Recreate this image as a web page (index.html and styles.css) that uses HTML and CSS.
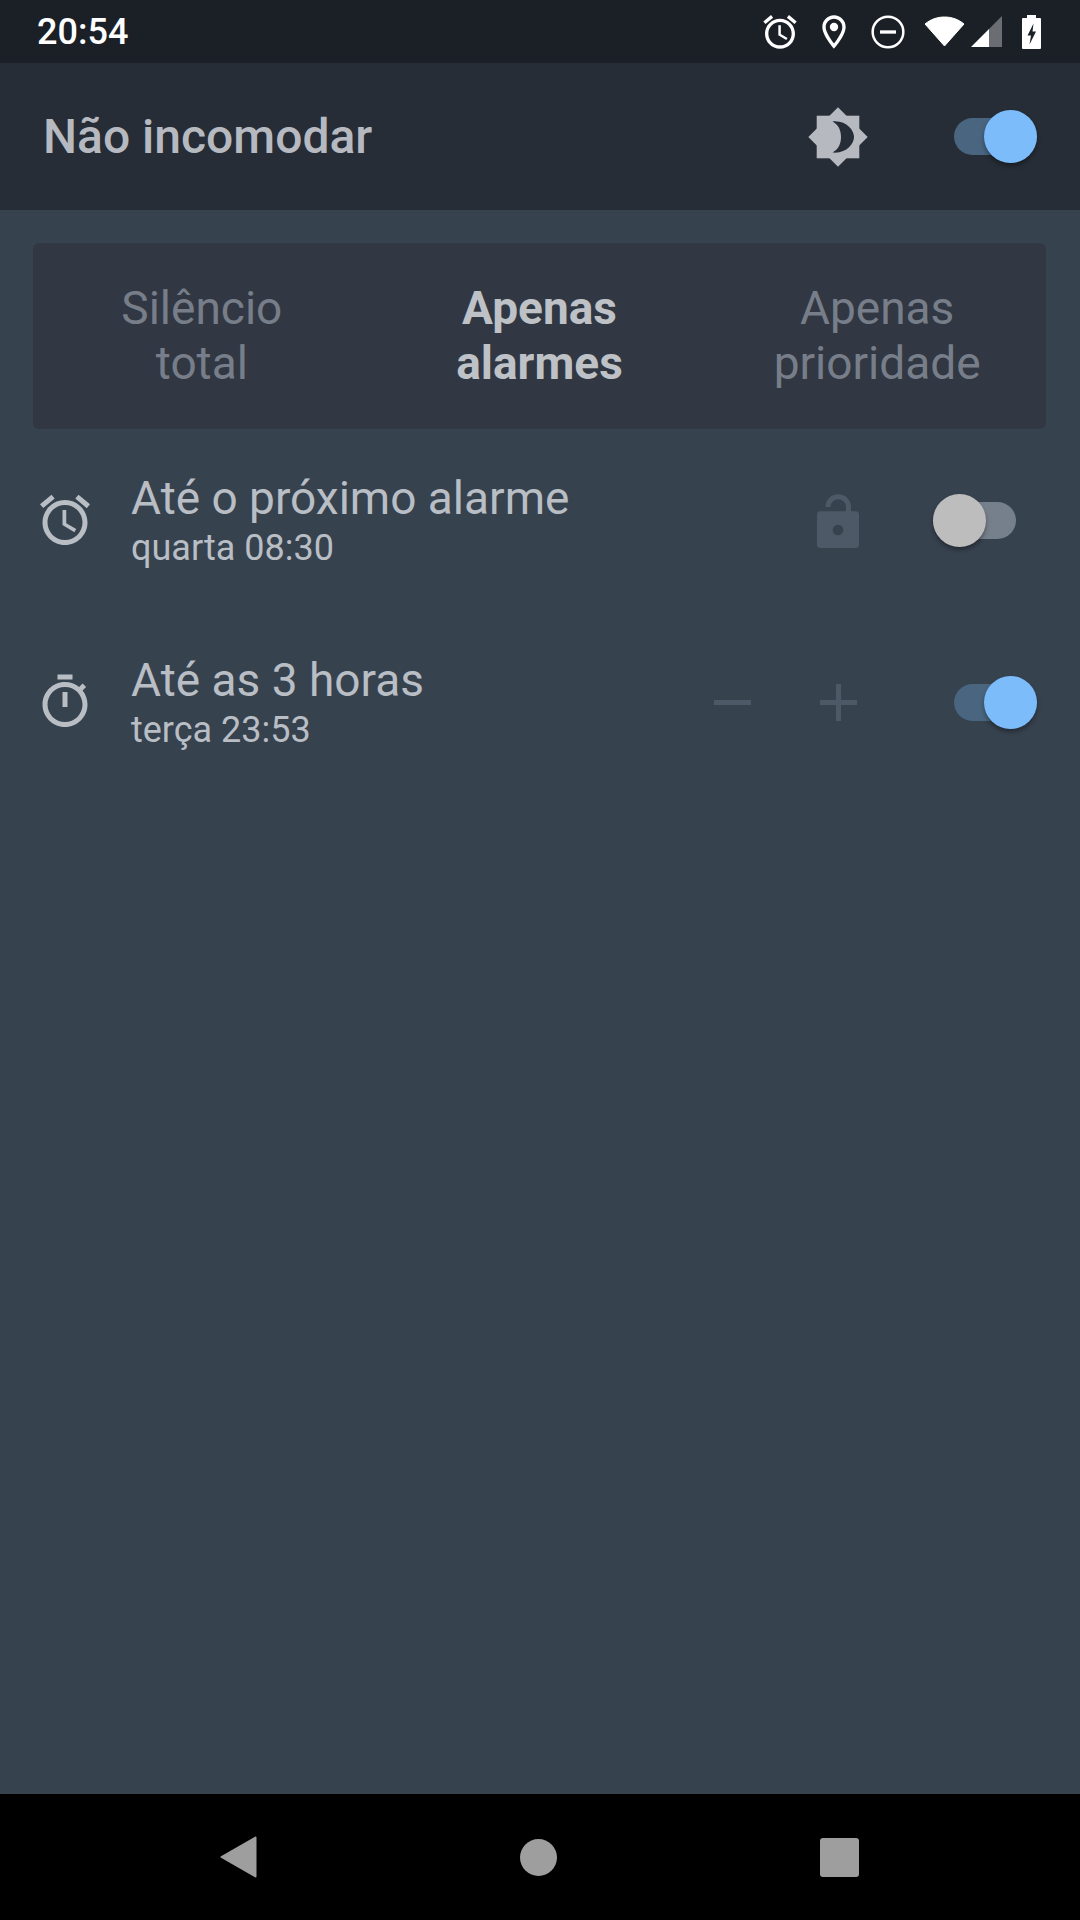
FILE: index.html

```html
<!DOCTYPE html>
<html lang="pt-BR">
<head>
  <meta charset="UTF-8" />
  <title>Não incomodar</title>
  <link rel="stylesheet" href="styles.css">
</head>
<body>
  <div class="screen">
    <!-- barra de status -->
    <div class="status-bar">
      <span class="clock">20:54</span>
      <div class="status-icons">
        <svg class="st-alarm" viewBox="0 0 24 24" fill="#fff"><path d="M22 5.72l-4.6-3.86-1.29 1.53 4.6 3.86L22 5.72zM7.88 3.39L6.6 1.86 2 5.71l1.29 1.53 4.59-3.85zM12.5 8H11v6l4.75 2.85.75-1.23-4-2.37V8zM12 4c-4.97 0-9 4.03-9 9s4.03 9 9 9 9-4.03 9-9-4.03-9-9-9zm0 16c-3.87 0-7-3.13-7-7s3.13-7 7-7 7 3.13 7 7-3.13 7-7 7z"/></svg>
        <svg class="st-pin" viewBox="0 0 24 24" fill="#fff"><path d="M12 2C8.13 2 5 5.13 5 9c0 5.25 7 13 7 13s7-7.75 7-13c0-3.87-3.13-7-7-7zM7 9c0-2.76 2.24-5 5-5s5 2.24 5 5c0 2.88-2.88 7.19-5 9.88C9.92 16.21 7 11.85 7 9z"/><circle cx="12" cy="9" r="2.5"/></svg>
        <svg class="st-dnd" viewBox="0 0 24 24" fill="none" stroke="#fff"><circle cx="12" cy="12" r="9.2" stroke-width="1.5"/><path d="M7.2 12h9.6" stroke-width="2"/></svg>
        <svg class="st-wifi" viewBox="0 0 41 31" fill="#fff" stroke="#fff" stroke-linejoin="round"><path d="M20.5 30 L1 8 C6.5 3.5 13 1 20.5 1 S34.5 3.5 40 8 Z"/></svg>
        <svg class="st-signal" viewBox="0 0 31 31"><path d="M31 0V31H18V13Z" fill="#fff" fill-opacity=".35"/><path d="M0 31L18 13V31Z" fill="#fff"/></svg>
        <svg class="st-battery" viewBox="0 0 19 34"><path d="M5 0h9v3h4a1 1 0 0 1 1 1v29a1 1 0 0 1-1 1H1a1 1 0 0 1-1-1V4a1 1 0 0 1 1-1h4z" fill="#fff"/><path d="M11.5 8.5L5.5 20.500H9L7.500 29.500L14 16.500H10.500Z" fill="#1b2027"/></svg>
      </div>
    </div>

    <div class="header">
      <h1>Não incomodar</h1>
      <button class="icon-btn">
        <svg class="brightness" viewBox="-30 -30 60 60">
          <rect x="-21.300" y="-21.300" width="42.600" height="42.600" fill="#b6bac0"/>
          <rect x="-21" y="-21" width="42" height="42" fill="#b6bac0" transform="rotate(45)"/>
          <path d="M-5.500-15.500C8-17 16-7 16 0C16 7 8 17-5.500 15.500C1 12 3 6 3 0C3-6 1-12-5.500-15.500Z" fill="#262d36"/>
        </svg>
      </button>
      <div class="switch on"><span class="thumb"></span></div>
    </div>

    <div class="content">
      <div class="tabs">
        <div class="tab">Silêncio<br>total</div>
        <div class="tab active">Apenas<br>alarmes</div>
        <div class="tab">Apenas<br>prioridade</div>
      </div>

      <div class="row">
        <svg class="row-icon" viewBox="0 0 24 24"><path d="M22 5.72l-4.6-3.86-1.29 1.53 4.6 3.86L22 5.72zM7.88 3.39L6.6 1.86 2 5.71l1.29 1.53 4.59-3.85zM12.5 8H11v6l4.75 2.85.75-1.23-4-2.37V8zM12 4c-4.97 0-9 4.03-9 9s4.03 9 9 9 9-4.03 9-9-4.03-9-9-9zm0 16c-3.87 0-7-3.13-7-7s3.13-7 7-7 7 3.13 7 7-3.13 7-7 7z"/></svg>
        <div class="row-text">
          <div class="row-title">Até o próximo alarme</div>
          <div class="row-sub">quarta 08:30</div>
        </div>
        <button class="icon-btn">
          <svg class="lock" viewBox="0 0 42 55"><path d="M11 14V13A10.300 10.300 0 0 1 31.500 13V20" fill="none" stroke="#4d5967" stroke-width="5"/><rect y="18.300" width="42" height="36.700" rx="3.500" fill="#4d5967"/><circle cx="21" cy="37" r="5.300" fill="#37424f"/></svg>
        </button>
        <div class="switch off"><span class="thumb"></span></div>
      </div>

      <div class="row">
        <svg class="row-icon" viewBox="0 0 24 24"><path d="M15 1H9v2h6V1zm-4 13h2V8h-2v6zm8.030-6.610l1.420-1.420c-.43-.51-.9-.99-1.410-1.410l-1.420 1.420C16.070 4.740 14.120 4 12 4c-4.970 0-9 4.030-9 9s4.020 9 9 9 9-4.030 9-9c0-2.120-.74-4.070-1.970-5.610zM12 20c-3.870 0-7-3.130-7-7s3.130-7 7-7 7 3.130 7 7-3.130 7-7 7z"/></svg>
        <div class="row-text">
          <div class="row-title">Até as 3 horas</div>
          <div class="row-sub">terça 23:53</div>
        </div>
        <button class="icon-btn">
          <svg class="stepper" viewBox="0 0 37 37"><path d="M0 18.500H37" stroke="#4d5967" stroke-width="5"/></svg>
        </button>
        <button class="icon-btn">
          <svg class="stepper" viewBox="0 0 37 37"><path d="M0 18.500H37M18.500 0V37" stroke="#4d5967" stroke-width="5"/></svg>
        </button>
        <div class="switch on"><span class="thumb"></span></div>
      </div>
    </div>

    <div class="nav-bar">
      <svg class="nav-back" viewBox="0 0 37 42"><path d="M35.500 1.500V40.500L1.500 21Z" fill="#9e9e9e" stroke="#9e9e9e" stroke-width="2" stroke-linejoin="round"/></svg>
      <span class="nav-home"></span>
      <span class="nav-recent"></span>
    </div>
  </div>
</body>
</html>
```

FILE: styles.css

```css
* {
  box-sizing: border-box;
}

body {
  margin: 0;
  font-family: Roboto, "Noto Sans", sans-serif;
  background-color: #37424f;
}

.screen {
  width: 1080px;
  height: 1920px;
  display: flex;
  flex-direction: column;
  overflow: hidden;
}

.status-bar {
  height: 63px;
  flex-shrink: 0;
  display: flex;
  align-items: center;
  justify-content: space-between;
  padding: 0 39px 0 37px;
  background-color: #1b2027;
}

.clock {
  color: #fff;
  font-size: 36px;
  font-weight: 500;
}

.status-icons {
  display: flex;
  align-items: center;
}

.status-icons svg {
  display: block;
}

.st-alarm,
.st-pin,
.st-dnd {
  width: 40px;
  height: 40px;
  margin-right: 14px;
}

.st-dnd {
  margin-right: 16px;
}

.st-wifi {
  width: 41px;
  height: 31px;
  margin-right: 6px;
}

.st-signal {
  width: 31px;
  height: 31px;
  margin-right: 20px;
}

.st-battery {
  width: 19px;
  height: 34px;
}

.header {
  height: 147px;
  flex-shrink: 0;
  display: flex;
  align-items: center;
  padding: 0 43px;
  background-color: #262d36;
}

h1 {
  flex: 1;
  margin: 0;
  color: #b6bac0;
  font-size: 48px;
  font-weight: 500;
}

.icon-btn {
  width: 106px;
  height: 106px;
  flex-shrink: 0;
  display: flex;
  align-items: center;
  justify-content: center;
  padding: 0;
  border: none;
  background: none;
}

.brightness {
  width: 60px;
  height: 60px;
}

.switch {
  width: 83px;
  height: 37px;
  flex-shrink: 0;
  display: flex;
  align-items: center;
  margin-left: 63px;
  border-radius: 19px;
}

.switch.on {
  justify-content: flex-end;
  background-color: #4a6580;
}

.switch.off {
  margin-left: 42px;
  margin-right: 21px;
  background-color: #76808c;
}

.thumb {
  width: 53px;
  height: 53px;
  flex-shrink: 0;
  border-radius: 50%;
  box-shadow: 0 3px 4px rgba(0, 0, 0, 0.35);
}

.switch.on .thumb {
  background-color: #7cbcfb;
}

.switch.off .thumb {
  background-color: #bdbdbd;
}

.content {
  flex: 1;
  padding-top: 33px;
}

.tabs {
  display: grid;
  grid-template-columns: repeat(3, 1fr);
  align-items: center;
  height: 186px;
  margin: 0 34px 0 33px;
  border-radius: 6px;
  background-color: #313843;
}

.tab {
  color: #777e89;
  font-size: 46px;
  line-height: 55px;
  text-align: center;
}

.tab.active {
  color: #bec1c6;
  font-weight: 700;
}

.row {
  height: 182px;
  display: flex;
  align-items: center;
  padding: 0 43px 0 35px;
}

.row-icon {
  width: 60px;
  height: 60px;
  flex-shrink: 0;
  fill: #b9bec5;
}

.row-text {
  flex: 1;
  margin-left: 36px;
}

.row-title {
  color: #b9bec5;
  font-size: 46px;
  line-height: 56px;
}

.row-sub {
  color: #b9bec5;
  font-size: 36px;
  line-height: 44px;
}

.lock {
  width: 42px;
  height: 55px;
}

.stepper {
  width: 37px;
  height: 37px;
}

.nav-bar {
  height: 126px;
  flex-shrink: 0;
  display: flex;
  align-items: center;
  gap: 263px;
  padding-left: 220px;
  background-color: #000;
}

.nav-back {
  width: 37px;
  height: 42px;
}

.nav-home {
  width: 37px;
  height: 37px;
  border-radius: 50%;
  background-color: #9e9e9e;
}

.nav-recent {
  width: 39px;
  height: 39px;
  border-radius: 3px;
  background-color: #9e9e9e;
}
```
